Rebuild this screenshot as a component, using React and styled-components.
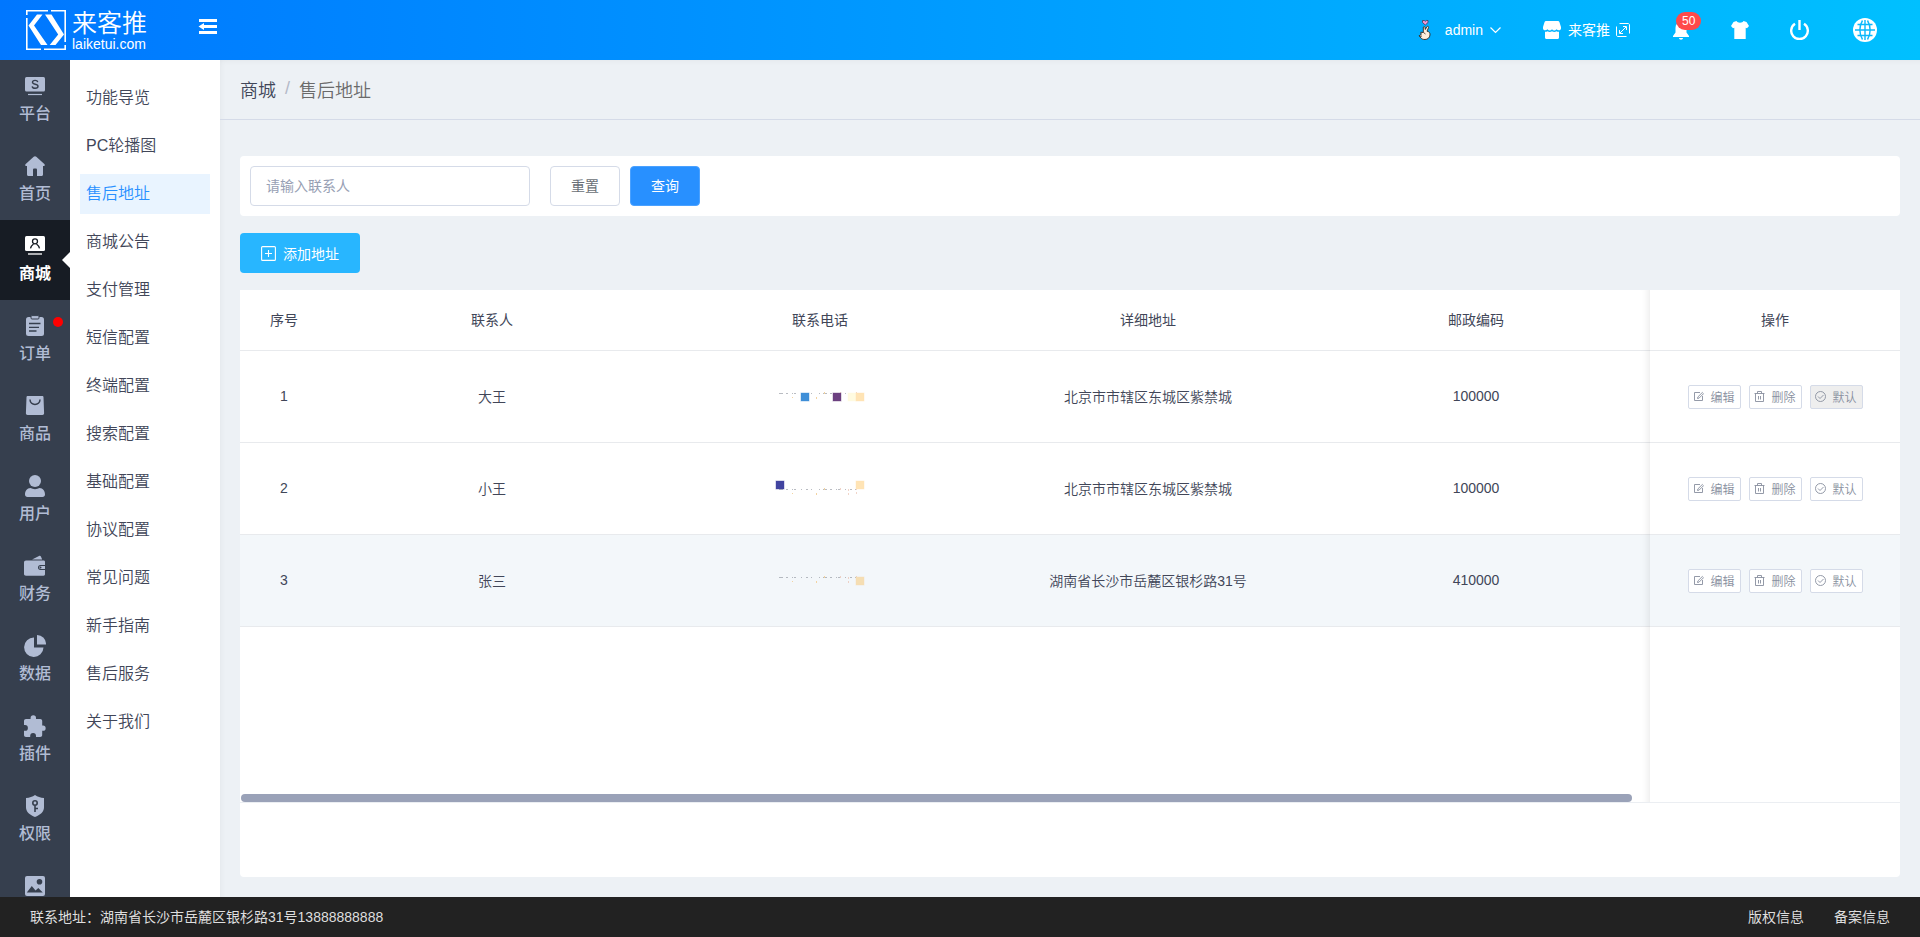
import React from 'react';
import styled, { createGlobalStyle, css } from 'styled-components';

const GlobalStyle = createGlobalStyle`
  *, *::before, *::after { box-sizing: border-box; }
  html, body, #root { height: 100%; }
  body {
    margin: 0;
    overflow: hidden;
    font-family: "Liberation Sans", "Noto Sans CJK SC", sans-serif;
    font-size: 14px;
    color: #414658;
  }
  a { color: inherit; text-decoration: none; }
  button, input { font: inherit; }
  button { cursor: pointer; }
  svg { display: block; flex: none; }
`;

const Page = styled.div`
  display: flex;
  flex-direction: column;
  height: 100vh;
`;

/* ---------- header ---------- */

const Header = styled.header`
  display: flex;
  align-items: center;
  flex: none;
  height: 60px;
  padding: 0 40px 0 26px;
  color: #fff;
  background: linear-gradient(90deg, #0077ff, #00c0ff);
`;

const Logo = styled.a`
  display: flex;
  align-items: center;
  gap: 6px;
  width: 172px;
`;

const LogoText = styled.span`
  display: flex;
  flex-direction: column;
  padding-top: 2px;
  font-size: 14px;
  line-height: 16px;
`;

const LogoName = styled.span`
  font-size: 25px;
  font-weight: 350;
  line-height: 26px;
`;

const PlainButton = styled.button`
  display: flex;
  align-items: center;
  justify-content: center;
  position: relative;
  padding: 0;
  border: 0;
  color: inherit;
  background: none;
  width: ${(p) => p.$width || 'auto'};
`;

const FoldButton = styled(PlainButton)`
  margin-bottom: 6px;
`;

const HeaderTools = styled.div`
  display: flex;
  align-items: center;
  gap: 40px;
  margin-left: auto;
`;

const ToolText = styled.span`
  margin: 0 6px 0 ${(p) => (p.$wide ? '12px' : '7px')};
  line-height: 20px;
  white-space: nowrap;
`;

const Badge = styled.span`
  position: absolute;
  left: 6px;
  bottom: 10px;
  padding: 0 6px;
  border-radius: 9px;
  background: #ff4a4a;
  font-size: 12px;
  line-height: 18px;
`;

/* ---------- body columns ---------- */

const Body = styled.div`
  display: flex;
  flex: 1;
  min-height: 0;
`;

const Sidebar = styled.nav`
  flex: none;
  width: 70px;
  overflow: hidden;
  background: #363f4e;
`;

const SideItem = styled.a`
  display: flex;
  flex-direction: column;
  align-items: center;
  gap: 7px;
  position: relative;
  height: 80px;
  padding-top: 15px;
  color: #b1bcd4;
  font-size: 16px;
  font-weight: 500;
  line-height: 20px;
  ${(p) =>
    p.$active &&
    css`
      color: #fff;
      font-weight: 700;
      background: #171c24;
      &::after {
        content: '';
        position: absolute;
        right: 0;
        top: 32px;
        border: 8px solid transparent;
        border-left: 0;
        border-right-color: #fff;
      }
    `}
`;

const RedDot = styled.span`
  position: absolute;
  top: 17px;
  right: 7px;
  width: 10px;
  height: 10px;
  border-radius: 50%;
  background: #f00;
`;

const SubMenu = styled.nav`
  display: flex;
  flex-direction: column;
  flex: none;
  gap: 8px;
  width: 150px;
  padding: 18px 10px;
  overflow: hidden;
  background: #fff;
`;

const SubItem = styled.a`
  flex: none;
  padding-left: 6px;
  font-size: 16px;
  font-weight: 350;
  line-height: 40px;
  color: ${(p) => (p.$active ? '#2890ff' : '#414658')};
  background: ${(p) => (p.$active ? '#e9f4ff' : 'transparent')};
`;

const Main = styled.main`
  display: flex;
  flex-direction: column;
  flex: 1;
  min-width: 0;
  background: #edf1f5;
  box-shadow: inset 4px 4px 6px -4px rgba(0, 0, 0, 0.06);
`;

const Breadcrumb = styled.nav`
  display: flex;
  align-items: center;
  gap: 9px;
  flex: none;
  height: 60px;
  padding: 0 20px 2px;
  border-bottom: 1px solid #d5dbe8;
  font-size: 18px;
  font-weight: 350;
`;

const Slash = styled.span`
  color: #b4b9c8;
`;

const Current = styled.span`
  color: #6a6a6a;
`;

const Content = styled.div`
  display: flex;
  flex-direction: column;
  align-items: flex-start;
  flex: 1;
  gap: 17px;
  min-height: 0;
  padding: 36px 20px 20px;
`;

const SearchBar = styled.form`
  display: flex;
  flex: none;
  gap: 10px;
  width: 100%;
  padding: 10px;
  border-radius: 4px;
  background: #fff;
`;

const SearchInput = styled.input`
  width: 280px;
  height: 40px;
  margin-right: 10px;
  padding: 0 15px;
  border: 1px solid #d5dbe8;
  border-radius: 4px;
  outline: none;
  color: #414658;
  &::placeholder {
    color: #97a0b4;
    opacity: 1;
  }
`;

const Button = styled.button`
  width: 70px;
  height: 40px;
  padding: 0 0 2px;
  border: 1px solid ${(p) => (p.$primary ? '#4aa1ff' : '#d5dbe8')};
  border-radius: 4px;
  color: ${(p) => (p.$primary ? '#fff' : '#6a7076')};
  background: ${(p) => (p.$primary ? '#2890ff' : '#fff')};
`;

const AddButton = styled.button`
  display: flex;
  align-items: center;
  justify-content: center;
  flex: none;
  gap: 7px;
  width: 120px;
  height: 40px;
  padding: 0;
  border: 0;
  border-radius: 4px;
  color: #fff;
  background: #28b6ff;
`;

/* ---------- table ---------- */

const Panel = styled.section`
  display: flex;
  flex-direction: column;
  flex: 1;
  width: 100%;
  min-height: 0;
  padding-bottom: 74px;
  border-radius: 0 0 4px 4px;
  background: #fff;
`;

const TableArea = styled.div`
  position: relative;
  flex: 1;
  min-height: 0;
  border-bottom: 1px solid #ebeef2;
`;

const TableScroll = styled.div`
  height: 100%;
  overflow-x: auto;
  overflow-y: hidden;
  scrollbar-width: none;
`;

const Table = styled.table`
  width: 1978px;
  height: 100%;
  border-collapse: separate;
  border-spacing: 0;
  table-layout: fixed;
`;

const Col = styled.col`
  width: ${(p) => p.$width}px;
`;

const Row = styled.tr`
  height: ${(p) => p.$height};
  background: ${(p) => (p.$hover ? '#f3f7fa' : '#fff')};
`;

const cell = css`
  padding: 0 0 2px;
  border-bottom: 1px solid #e8eaed;
  text-align: center;
  background: inherit;
`;

const HeadCell = styled.th`
  ${cell}
  font-weight: 400;
`;

const Cell = styled.td`
  ${cell}
  font-weight: 350;
  ${(p) => p.$blank && 'border-bottom: 0;'}
`;

const fixed = css`
  position: sticky;
  right: 0;
  &::before {
    content: '';
    position: absolute;
    top: 0;
    bottom: -1px;
    left: -30px;
    width: 30px;
    box-shadow: inset -10px 0 10px -10px rgba(0, 0, 0, 0.12);
  }
`;

const FixedHeadCell = styled(HeadCell)`
  ${fixed}
`;

const FixedCell = styled(Cell)`
  ${fixed}
  padding: 0;
`;

const Center = styled.div`
  display: flex;
  justify-content: center;
  gap: 8px;
`;

const ActionButton = styled.button`
  display: flex;
  align-items: center;
  justify-content: center;
  gap: 6px;
  width: 53px;
  height: 24px;
  padding: 0;
  border: 1px solid #d5dbe8;
  border-radius: 2px;
  font-size: 12px;
  font-weight: 350;
  color: #888f9e;
  background: ${(p) => (p.disabled ? '#eee' : '#fff')};
`;

const ScrollThumb = styled.div`
  position: absolute;
  left: 1px;
  bottom: 0;
  width: calc(84% - 3px);
  height: 8px;
  border-radius: 4px;
  background: #9aa2b8;
`;

/* ---------- footer ---------- */

const Footer = styled.footer`
  display: flex;
  align-items: center;
  flex: none;
  gap: 30px;
  height: 40px;
  padding: 0 30px 2px;
  color: #dedede;
  background: #222;
`;

const FooterAddress = styled.span`
  margin-right: auto;
`;

/* ---------- icons ---------- */

const dark = '#363f4e';

const SideIcons = {
  platform: (
    <>
      <rect x="1" y="2" width="20" height="14.500" rx="1.500" />
      <path d="M4 19.500h14" stroke="currentColor" strokeWidth="1.200" />
      <path d="M13.800 7.200c-.3-1.200-1.300-1.800-2.700-1.800-1.500 0-2.600.7-2.600 1.900 0 2.700 5.500 1.200 5.500 4 0 1.300-1.200 2-2.800 2-1.700 0-2.800-.7-3-2" fill="none" stroke={dark} strokeWidth="1.400" />
    </>
  ),
  home: (
    <path d="M11 1.200c.5 0 .9.200 1.300.5l8 7.300c1 1 .6 2-.5 2h-.8v8.500c0 .9-.6 1.500-1.500 1.500H13v-6c0-1-.6-1.400-1.200-1.400h-1.600c-.6 0-1.200.4-1.200 1.400v6H4.500c-.9 0-1.500-.6-1.500-1.500V11h-.8c-1.100 0-1.500-1-.5-2l8-7.300c.4-.3.800-.5 1.300-.5z" />
  ),
  mall: (
    <>
      <rect x="1" y="1" width="20" height="15" rx="1.500" />
      <path d="M4 19h14" stroke="currentColor" strokeWidth="1.300" />
      <circle cx="11" cy="6.300" r="2.500" fill="none" stroke="#171c24" strokeWidth="1.300" />
      <path d="M6.500 13.300c.5-2 1.700-3.300 3-4.300M15.500 13.300c-.5-2-1.700-3.300-3-4.300" fill="none" stroke="#171c24" strokeWidth="1.300" />
    </>
  ),
  order: (
    <>
      <rect x="2" y="2" width="18" height="19" rx="2.500" />
      <rect x="7" y="0.600" width="8" height="3.400" rx="1" stroke={dark} strokeWidth="1" />
      <path d="M5 8.500h11.500M5 12.300h10M5 16h7.500" stroke={dark} strokeWidth="1.300" />
    </>
  ),
  goods: (
    <>
      <path d="M3.800 1h14.400c.8 0 1.300.5 1.300 1.300l.6 16c0 1-.7 1.700-1.700 1.700H3.600c-1 0-1.700-.7-1.700-1.700l.6-16c0-.8.5-1.300 1.300-1.300z" />
      <path d="M6 4.500c0 6.500 10 6.500 10 0" fill="none" stroke={dark} strokeWidth="1.500" />
    </>
  ),
  user: (
    <>
      <circle cx="11" cy="6" r="6" />
      <path d="M1 19.500C1 16 3 13 6.500 13c2.500 1.500 6.500 1.500 9 0C19 13 21 16 21 19.500c0 1.500-1 2.500-2.500 2.500h-15C2 22 1 21 1 19.500z" />
    </>
  ),
  finance: (
    <>
      <path d="M8 4.500L15 1c1-.4 1.700 0 2 .8l1.200 2.700z" />
      <path d="M2 5.500h17.500c1 0 1.500.5 1.500 1.500v3h-4.500c-3.300 0-3.300 5 0 5H21v4c0 1-.5 1.700-1.500 1.700H2C.8 20.700 0 20 0 19V7.500c0-1.200.8-2 2-2z" />
      <path d="M21 11h-4.500c-2 0-2 3 0 3H21z" />
      <circle cx="16.500" cy="12.500" r="1" fill={dark} />
    </>
  ),
  data: (
    <>
      <path d="M10 2.500v10h9.500A9.700 9.700 0 1 1 10 2.500z" />
      <path d="M13 0a9 9 0 0 1 9 9.500h-9z" />
    </>
  ),
  plugin: (
    <path d="M19 10.500h-.8V6c0-1.200-.8-2-2-2H12V3a2.700 2.700 0 0 0-5.400 0v1H2C.8 4 0 4.800 0 6v4h1a2.900 2.900 0 0 1 0 5.800H0V20c0 1.200.8 2 2 2h4.200v-1a2.900 2.900 0 0 1 5.800 0v1h4.200c1.200 0 2-.8 2-2v-4.200h.8a2.650 2.650 0 0 0 0-5.300z" />
  ),
  permission: (
    <>
      <path d="M11 0c2.500 1.700 5.500 2.700 9 3v9.500c0 4.500-4 7.500-9 9.500-5-2-9-5-9-9.500V3c3.500-.3 6.500-1.300 9-3z" />
      <circle cx="11" cy="8" r="2.200" fill="none" stroke={dark} strokeWidth="1.600" />
      <path d="M11 10.500V17M11 13.500h3" stroke={dark} strokeWidth="1.600" />
    </>
  ),
  picture: (
    <>
      <rect x="1" y="1" width="20" height="20" rx="2" />
      <circle cx="15.500" cy="6.800" r="2.800" fill={dark} />
      <path d="M2.800 17.500l5-6.500 3.700 4.500 2.800-2.500 4.500 4.500z" fill={dark} />
    </>
  ),
};

const SideIcon = ({ name }) => (
  <svg width="22" height="22" viewBox="0 0 22 22" fill="currentColor" aria-hidden="true">
    {SideIcons[name]}
  </svg>
);

const LogoMark = () => (
  <svg width="40" height="40" viewBox="0 0 40 40" fill="none" aria-hidden="true">
    <path d="M.8 5V.8H22M25 .8h14.200V32M39.200 35v4.200H18M15 39.200H.8V8" stroke="#fff" strokeWidth="1.600" />
    <path d="M11 4.500h5.500L8 15.500 21.500 35H15L2.500 15.500z" fill="#fff" />
    <path d="M19 4.500h6.500L38 24.500 29.500 35h-5.800l8.500-10.500z" fill="#fff" />
  </svg>
);

const FoldIcon = () => (
  <svg width="20" height="16" viewBox="0 0 20 16" fill="#fff" aria-hidden="true">
    <path d="M1 0h18v3H1zM8 6h11v3H8zM1 12h18v3H1zM.5 7.500l5.500-3.500v2h2v3H6v2z" />
  </svg>
);

const HandIcon = () => (
  <svg width="16" height="22" viewBox="0 0 16 22" aria-hidden="true">
    <path d="M5.500 1.500h1.800l1 .8 1-.8H11v2L8.300 6 5.500 3.500z" fill="#f39ad8" stroke="#4a3550" strokeWidth=".8" />
    <path d="M6.300 8c1-.9 1.900-.2 1.800 1l.2 1.500L9.800 7.800c1-1 2.200-.3 1.700.9l-1.500 3.500c2.300.3 3.200 1.900 3 3.800-.3 2.700-2.300 4.500-5 4.500-2 0-3.300-.5-4-1.500L2 16.800l2.200-1.300-.4-2.300 2.500.3z" fill="#fdeedd" stroke="#33281f" strokeWidth=".9" />
    <path d="M6.500 13.500l2 1.500M2.800 17.500l2.200-.5" stroke="#33281f" strokeWidth=".8" />
  </svg>
);

const ChevronDown = () => (
  <svg width="14" height="14" viewBox="0 0 14 14" fill="none" stroke="#fff" aria-hidden="true">
    <path d="M1.500 4.500l5 5 5-5" strokeWidth="1.200" />
  </svg>
);

const ShopIcon = () => (
  <svg width="18" height="18" viewBox="0 0 18 18" fill="#fff" aria-hidden="true">
    <path d="M3 0h12c.7 0 1.100.3 1.400 1L18 6v1.500c0 2-3 2.500-4.500.7-1.300 1.600-3.200 1.600-4.500 0-1.300 1.600-3.200 1.600-4.500 0C3 10 0 9.500 0 7.500V6l1.600-5C1.900.3 2.300 0 3 0z" />
    <path d="M2 10.800c1 .1 1.800-.1 2.500-.6 1.300.9 3.200.9 4.500 0 1.300.9 3.200.9 4.500 0 .7.500 1.500.7 2.500.6V16.500c0 .9-.6 1.500-1.500 1.500h-11C2.600 18 2 17.400 2 16.500z" />
  </svg>
);

const ExternalIcon = () => (
  <svg width="14" height="14" viewBox="0 0 14 14" fill="none" stroke="#fff" aria-hidden="true">
    <path d="M3.500.5h8.500c.9 0 1.500.6 1.500 1.500v8.500M10.500 13.500H2c-.9 0-1.500-.6-1.500-1.500V3.500" />
    <path d="M4 10l6-6M7 3.500h3.500V7M3.500 7v3.500H7" />
  </svg>
);

const BellIcon = () => (
  <svg width="20" height="20" viewBox="0 0 20 20" fill="#fff" aria-hidden="true">
    <path d="M11 1.500c3.500.6 5.500 3 5.500 6.500v4.500L19 16v1H3v-1l2.500-3.500V8c0-3.500 2-5.900 5.500-6.500zM9 18h4c0 2.200-4 2.200-4 0z" />
  </svg>
);

const ShirtIcon = () => (
  <svg width="20" height="20" viewBox="0 0 20 20" fill="#fff" aria-hidden="true">
    <path d="M6.500 1c1 2.200 6 2.200 7 0l3 .9L19 6l-2 2.300-1.300-.5V19H4.300V7.800L3 8.300 1 6l2.500-4.100z" />
  </svg>
);

const PowerIcon = () => (
  <svg width="20" height="20" viewBox="0 0 20 20" fill="none" stroke="#fff" aria-hidden="true">
    <path d="M5 3.800a8.300 8.300 0 1 0 9 0M9.500 0v10" strokeWidth="2.400" />
  </svg>
);

const GlobeIcon = () => (
  <svg width="24" height="24" viewBox="0 0 24 24" fill="none" stroke="#0bb8fb" aria-hidden="true">
    <circle cx="12" cy="12" r="12" fill="#fff" stroke="none" />
    <g strokeWidth="1.400">
      <path d="M12 2v20M2 12h20M4.500 6.500h15M4.500 17.500h15" />
      <path d="M9.500 2.500c-3.500 5.500-3.500 13.500 0 19M14.500 2.500c3.500 5.500 3.500 13.500 0 19" />
    </g>
  </svg>
);

const PlusBoxIcon = () => (
  <svg width="15" height="15" viewBox="0 0 15 15" fill="none" stroke="#fff" aria-hidden="true">
    <rect x=".6" y=".6" width="13.800" height="13.800" rx="1" strokeWidth="1.100" />
    <path d="M7.500 4v7M4 7.500h7" strokeWidth="1.100" />
  </svg>
);

const ActionIcons = {
  edit: <path d="M7 1.500H1.500v8h8V5M4.500 7.500l.4-1.600L9.300 1.500l1.200 1.200-4.400 4.400z" />,
  remove: <path d="M.5 2.500h10M3.500 2.500v-2h4v2M1.500 2.500v8h8v-8M4.500 5v3.500M6.500 5v3.500" />,
  check: <path d="M5.500.5a5 5 0 1 0 0 10 5 5 0 0 0 0-10zM3 5.500l2 2 3.500-3.500" />,
};

const ActionIcon = ({ name }) => (
  <svg width="11" height="11" viewBox="0 0 11 11" fill="none" stroke="currentColor" strokeWidth=".9" aria-hidden="true">
    {ActionIcons[name]}
  </svg>
);

const PhoneMask = ({ squares, line }) => (
  <svg width="90" height="18" viewBox="0 0 90 18" role="img" aria-label="联系电话">
    <path
      d={`M4 ${line}.500h83`}
      stroke="#8a8f99"
      strokeOpacity=".6"
      strokeDasharray="4 3 2 4 1 1 2 5 1 4 2 3 1 7 1 3"
    />
    <path d={`M65.500 ${line - 1}v4M73.500 ${line}v7M81.500 ${line - 1}v8`} stroke="#e8b7a4" strokeOpacity=".6" strokeDasharray="2 2" />
    <path d={`M17.500 ${line + 4}v1M41.500 ${line + 4}v2M49.500 ${line - 1}v2`} stroke="#f3d3a0" />
    {squares.map(([x, y, color]) => (
      <rect key={x} x={x} y={y} width="8" height="8" fill={color} stroke={color} strokeOpacity=".4" />
    ))}
  </svg>
);

/* ---------- data ---------- */

const sideItems = [
  ['platform', '平台'],
  ['home', '首页'],
  ['mall', '商城'],
  ['order', '订单'],
  ['goods', '商品'],
  ['user', '用户'],
  ['finance', '财务'],
  ['data', '数据'],
  ['plugin', '插件'],
  ['permission', '权限'],
  ['picture', ''],
];

const subItems = [
  '功能导览', 'PC轮播图', '售后地址', '商城公告', '支付管理', '短信配置', '终端配置',
  '搜索配置', '基础配置', '协议配置', '常见问题', '新手指南', '售后服务', '关于我们',
];

const rows = [
  {
    id: 1, name: '大王', address: '北京市市辖区东城区紫禁城', zip: '100000', isDefault: true, line: 6,
    squares: [[26, 6, '#3f8fd8'], [58, 6, '#6c4080'], [73, 6, '#fffbe0'], [81, 6, '#ffe4b5']],
  },
  {
    id: 2, name: '小王', address: '北京市市辖区东城区紫禁城', zip: '100000', line: 10,
    squares: [[1, 2, '#4144a0'], [81, 2, '#ffe4b5']],
  },
  {
    id: 3, name: '张三', address: '湖南省长沙市岳麓区银杉路31号', zip: '410000', hover: true, line: 6,
    squares: [[81, 6, '#f5deb3']],
  },
];

export default function App() {
  return (
    <Page>
      <GlobalStyle />
      <Header>
        <Logo href="#">
          <LogoMark />
          <LogoText>
            <LogoName>来客推</LogoName>
            laiketui.com
          </LogoText>
        </Logo>
        <FoldButton type="button" aria-label="收起菜单"><FoldIcon /></FoldButton>
        <HeaderTools>
          <PlainButton type="button">
            <HandIcon />
            <ToolText $wide>admin</ToolText>
            <ChevronDown />
          </PlainButton>
          <PlainButton type="button">
            <ShopIcon />
            <ToolText>来客推</ToolText>
            <ExternalIcon />
          </PlainButton>
          <PlainButton type="button" aria-label="消息">
            <BellIcon />
            <Badge>50</Badge>
          </PlainButton>
          <PlainButton type="button" aria-label="主题"><ShirtIcon /></PlainButton>
          <PlainButton type="button" aria-label="退出"><PowerIcon /></PlainButton>
          <PlainButton type="button" aria-label="语言" $width="30px"><GlobeIcon /></PlainButton>
        </HeaderTools>
      </Header>

      <Body>
        <Sidebar>
          {sideItems.map(([icon, label]) => (
            <SideItem key={icon} href="#" $active={icon === 'mall'} aria-label={label || '图片'}>
              <SideIcon name={icon} />
              {label}
              {icon === 'order' && <RedDot />}
            </SideItem>
          ))}
        </Sidebar>

        <SubMenu>
          {subItems.map((label) => (
            <SubItem key={label} href="#" $active={label === '售后地址'}>{label}</SubItem>
          ))}
        </SubMenu>

        <Main>
          <Breadcrumb>
            <a href="#">商城</a>
            <Slash>/</Slash>
            <Current>售后地址</Current>
          </Breadcrumb>

          <Content>
            <SearchBar onSubmit={(e) => e.preventDefault()}>
              <SearchInput type="text" placeholder="请输入联系人" aria-label="联系人" />
              <Button type="reset">重置</Button>
              <Button type="submit" $primary>查询</Button>
            </SearchBar>

            <AddButton type="button"><PlusBoxIcon />添加地址</AddButton>

            <Panel>
              <TableArea>
                <TableScroll>
                  <Table>
                    <colgroup>
                      <Col $width={88} />
                      <Col $width={328} />
                      <Col $width={328} />
                      <Col $width={328} />
                      <Col $width={328} />
                      <Col $width={328} />
                      <Col $width={250} />
                    </colgroup>
                    <thead>
                      <Row $height="61px">
                        <HeadCell>序号</HeadCell>
                        <HeadCell>联系人</HeadCell>
                        <HeadCell>联系电话</HeadCell>
                        <HeadCell>详细地址</HeadCell>
                        <HeadCell>邮政编码</HeadCell>
                        <HeadCell />
                        <FixedHeadCell>操作</FixedHeadCell>
                      </Row>
                    </thead>
                    <tbody>
                      {rows.map((row) => (
                        <Row key={row.id} $height="92px" $hover={row.hover}>
                          <Cell>{row.id}</Cell>
                          <Cell>{row.name}</Cell>
                          <Cell>
                            <Center><PhoneMask squares={row.squares} line={row.line} /></Center>
                          </Cell>
                          <Cell>{row.address}</Cell>
                          <Cell>{row.zip}</Cell>
                          <Cell />
                          <FixedCell>
                            <Center>
                              <ActionButton type="button"><ActionIcon name="edit" />编辑</ActionButton>
                              <ActionButton type="button"><ActionIcon name="remove" />删除</ActionButton>
                              <ActionButton type="button" disabled={row.isDefault}>
                                <ActionIcon name="check" />默认
                              </ActionButton>
                            </Center>
                          </FixedCell>
                        </Row>
                      ))}
                      <Row $height="auto">
                        <Cell colSpan={6} $blank />
                        <FixedCell $blank />
                      </Row>
                    </tbody>
                  </Table>
                </TableScroll>
                <ScrollThumb />
              </TableArea>
            </Panel>
          </Content>
        </Main>
      </Body>

      <Footer>
        <FooterAddress>联系地址：湖南省长沙市岳麓区银杉路31号13888888888</FooterAddress>
        <a href="#">版权信息</a>
        <a href="#">备案信息</a>
      </Footer>
    </Page>
  );
}
